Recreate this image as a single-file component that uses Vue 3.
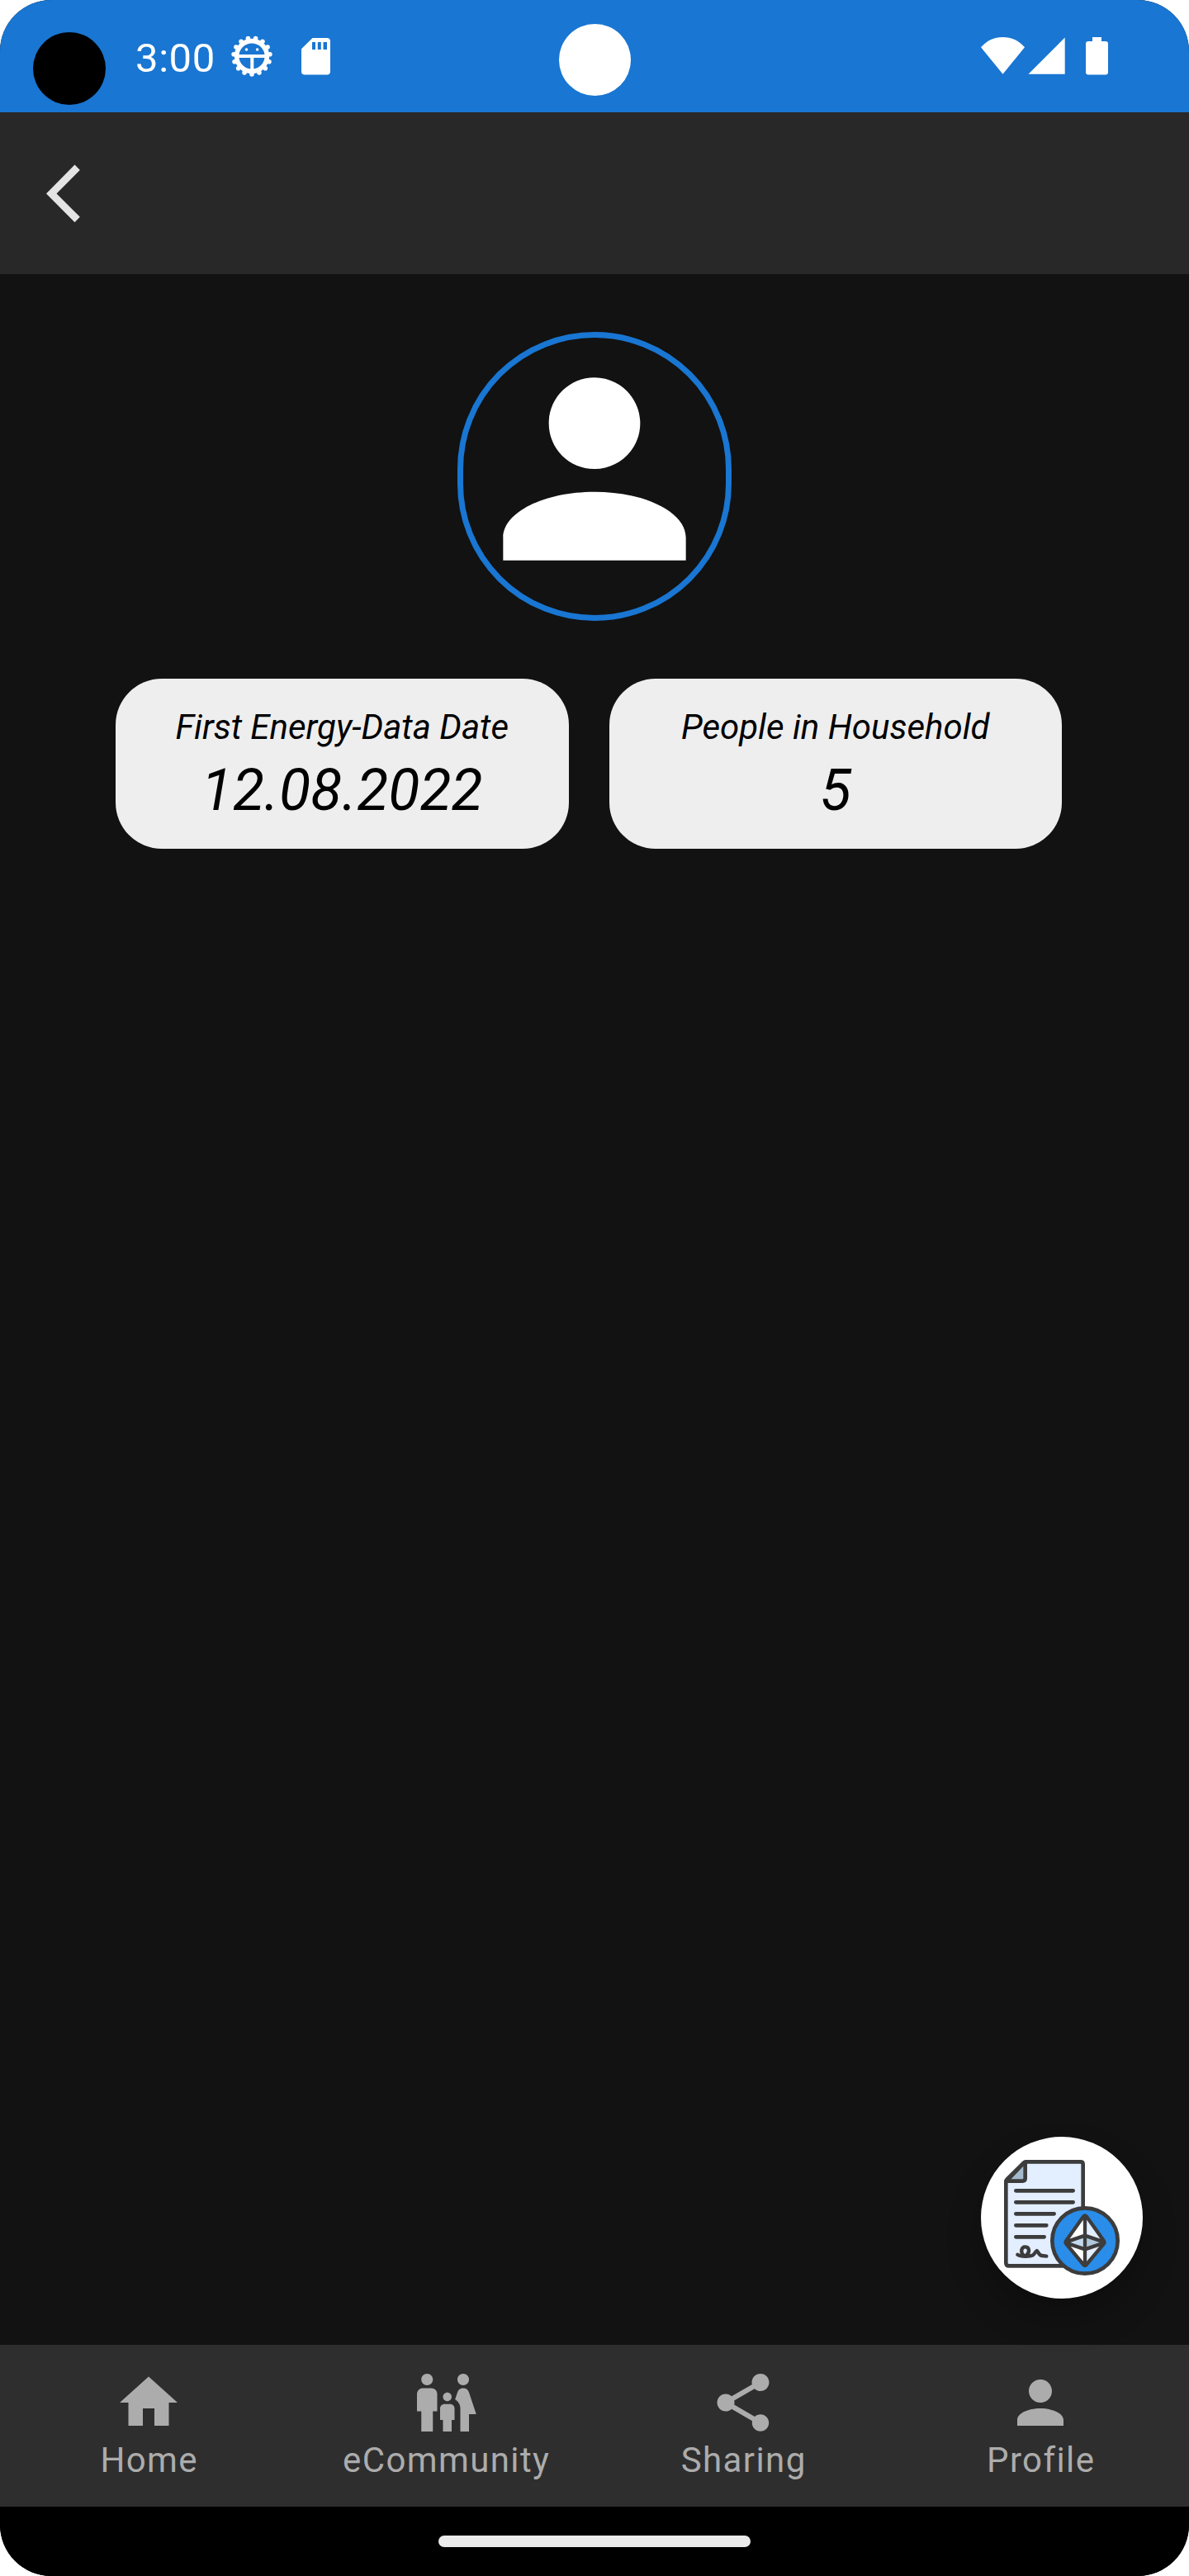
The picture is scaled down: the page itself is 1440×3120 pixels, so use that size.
<script setup>
const teeth = Array.from({ length: 15 }, (_, i) => {
  const a = ((12 + i * 24) * Math.PI) / 180
  return { x: 25 + 22 * Math.sin(a), y: 25 - 22 * Math.cos(a) }
})

const cards = [
  { label: 'First Energy-Data Date', value: '12.08.2022' },
  { label: 'People in Household', value: '5' },
]

const personPath =
  'M12 12c2.21 0 4-1.79 4-4s-1.79-4-4-4-4 1.79-4 4 1.79 4 4 4zm0 2c-4.42 0-8 1.79-8 4v2h16v-2c0-2.21-3.58-4-8-4z'

const tabs = [
  { label: 'Home', path: 'M10 20v-6h4v6h5v-8h3L12 3 2 12h3v8z' },
  {
    label: 'eCommunity',
    path: 'M16 4c0-1.11.89-2 2-2s2 .89 2 2-.89 2-2 2-2-.89-2-2zm4 18v-6h2.5l-2.54-7.63C19.68 7.55 18.92 7 18.06 7h-.12c-.86 0-1.63.55-1.9 1.37l-.86 2.58c1.08.6 1.82 1.73 1.82 3.05v8h3zm-7.5-10.5c.83 0 1.5-.67 1.5-1.5s-.67-1.5-1.5-1.5S11 9.17 11 10s.67 1.5 1.5 1.5zM5.5 6c1.11 0 2-.89 2-2s-.89-2-2-2-2 .89-2 2 .89 2 2 2zm2 16v-7H9V9c0-1.1-.9-2-2-2H4c-1.1 0-2 .9-2 2v6h1.5v7h4zm6.5 0v-4h1v-4c0-.82-.68-1.5-1.5-1.5h-2c-.82 0-1.5.68-1.5 1.5v4h1v4h3z',
  },
  {
    label: 'Sharing',
    path: 'M18 16.08c-.76 0-1.44.3-1.96.77L8.91 12.7c.05-.23.09-.46.09-.7s-.04-.47-.09-.7l7.05-4.11c.54.5 1.25.81 2.04.81 1.66 0 3-1.34 3-3s-1.34-3-3-3-3 1.34-3 3c0 .24.04.47.09.7L8.04 9.81C7.5 9.31 6.79 9 6 9c-1.66 0-3 1.34-3 3s1.34 3 3 3c.79 0 1.5-.31 2.04-.81l7.12 4.16c-.05.21-.08.43-.08.65 0 1.61 1.31 2.92 2.92 2.92 1.61 0 2.92-1.31 2.92-2.92s-1.31-2.92-2.92-2.92z',
  },
  { label: 'Profile', path: personPath },
]
</script>

<template>
  <div class="phone">
    <div class="status">
      <span class="lens"></span>
      <span class="camera"></span>
      <span class="clock">3:00</span>
      <svg class="gear" width="50" height="50" viewBox="0 0 50 50">
        <circle v-for="(t, i) in teeth" :key="i" :cx="t.x" :cy="t.y" r="2.8" fill="#fff" />
        <circle cx="25" cy="25" r="18.4" fill="none" stroke="#fff" stroke-width="5.6" />
        <path d="M9 25H41M25.3 25V41" stroke="#fff" stroke-width="4" />
        <circle cx="18.5" cy="17" r="1.8" fill="#fff" />
        <circle cx="31.6" cy="17" r="1.8" fill="#fff" />
      </svg>
      <svg class="sd" width="35" height="45" viewBox="0 0 35 45">
        <path fill="#fff" fill-rule="evenodd" d="M13.5 0H31q4 0 4 4V40.500q0 4-4 4H4q-4 0-4-4V13.300ZM13 5v9h4V5ZM19.800 5v9h4V5ZM26.500 5v9h4.500V5Z" />
      </svg>
      <span class="grow"></span>
      <svg class="wifi" width="53" height="45" viewBox="0 0 53 45">
        <path fill="#fff" d="M0 12.300C7 4 16 0 26.500 0S46 4 53 12.300L26.500 44.700Z" />
      </svg>
      <svg class="signal" width="45" height="45" viewBox="0 0 45 45">
        <path fill="#fff" d="M44.700 .5V44.700H.5Z" />
      </svg>
      <svg class="battery" width="27" height="46" viewBox="0 0 27 46">
        <path fill="#fff" d="M8 0H19V5H24q3 0 3 3V42.600q0 3-3 3H3q-3 0-3-3V8q0-3 3-3H8Z" />
      </svg>
    </div>

    <header class="appbar">
      <svg width="42" height="71" viewBox="0 0 42 71">
        <path fill="#e4e4e4" d="M34.500 .5 40.800 7 12.500 35.500 40.800 63.800 34.500 70.300 0 35.500Z" />
      </svg>
    </header>

    <main class="content">
      <div class="avatar">
        <svg width="332" height="332" viewBox="0 0 24 24"><path fill="#fff" :d="personPath" /></svg>
      </div>
      <div class="cards">
        <section v-for="c in cards" :key="c.label" class="card">
          <span class="label">{{ c.label }}</span>
          <span class="value">{{ c.value }}</span>
        </section>
      </div>
      <button class="fab" aria-label="Contract">
        <svg width="196" height="196" viewBox="84 84 588 588" fill="none" stroke="#3c3c3c" stroke-width="14" stroke-linecap="round" stroke-linejoin="round">
          <path fill="#e3eeff" d="M247 175H446q9 0 9 9V544q0 9-9 9H186q-11 0-11-11V246q0-4 4-8L240 178q3-3 7-3Z" />
          <path fill="#a4b9cb" d="M245 177V235q0 10-10 10H177L240 179Z" />
          <path d="M211 280H419M211 322H419M211 364H350M211 406H322M211 448H314" />
          <path stroke-width="13" d="M217 512C228 520 262 520 273 514 280 509 283 499 287 498 292 500 294 516 306 516L322 518M239 515C227 504 230 484 245 484 261 484 263 506 247 516" />
          <circle cx="462" cy="462" r="119" fill="#298de9" />
          <g stroke="none">
            <path fill="#fff" d="M462 370V554L391 468Z" />
            <path fill="#e3eeff" d="M462 370V554L533 468Z" />
            <path fill="#c3d9ee" d="M391 468 462 443V493Z" />
            <path fill="#b0c9da" d="M533 468 462 443V493Z" />
          </g>
          <path stroke-width="13" d="M457 373q5-6 10 0L531 463q3 5 0 9L467 549q-5 6-10 0L393 472q-3-4 0-9ZM462 370V552M394 466 462 443 530 466M394 470 462 493 530 470" />
        </svg>
      </button>
    </main>

    <nav class="tabs">
      <a v-for="t in tabs" :key="t.label" class="tab">
        <svg width="84" height="84" viewBox="0 0 24 24"><path fill="#acacac" :d="t.path" /></svg>
        <span>{{ t.label }}</span>
      </a>
    </nav>
    <div class="system"><span class="pill"></span></div>
  </div>
</template>

<style>
body {
  margin: 0;
  background: #fff;
}
</style>

<style scoped>
.phone {
  width: 1440px;
  height: 3120px;
  display: flex;
  flex-direction: column;
  overflow: hidden;
  border-radius: 62px;
  background: #121212;
  font-family: Roboto, "Liberation Sans", sans-serif;
}
.status {
  position: relative;
  display: flex;
  align-items: flex-start;
  box-sizing: border-box;
  height: 136px;
  padding: 0 98px 0 164px;
  background: #1976d2;
}
.lens,
.camera {
  position: absolute;
  border-radius: 50%;
}
.lens {
  left: 40px;
  top: 39px;
  width: 88px;
  height: 88px;
  background: #000;
}
.camera {
  left: 677px;
  top: 29px;
  width: 87px;
  height: 87px;
  background: #fff;
}
.clock {
  width: 116px;
  margin-top: 42px;
  font-size: 49px;
  line-height: 58px;
  letter-spacing: 0.6px;
  color: #fff;
}
.gear {
  margin-top: 43px;
}
.sd {
  margin: 46px 0 0 35px;
}
.grow {
  flex: 1;
}
.wifi {
  margin-top: 45px;
}
.signal {
  margin: 45px 0 0 4px;
}
.battery {
  margin: 45px 0 0 25px;
}
.appbar {
  display: flex;
  align-items: center;
  box-sizing: border-box;
  height: 196px;
  padding-left: 56px;
  background: #282828;
}
.content {
  position: relative;
  flex: 1;
  display: flex;
  flex-direction: column;
  align-items: center;
  padding-top: 70px;
}
.avatar {
  box-sizing: border-box;
  width: 332px;
  height: 350px;
  border: 7px solid #1976d2;
  border-radius: 175px;
}
.avatar svg {
  display: block;
  margin: -7px;
}
.cards {
  display: flex;
  gap: 49px;
  align-self: stretch;
  margin: 70px 154px 0 140px;
}
.card {
  flex: 1;
  display: flex;
  flex-direction: column;
  align-items: center;
  box-sizing: border-box;
  height: 206px;
  padding-top: 35px;
  border-radius: 56px;
  background: #eee;
  color: #000;
  font-style: italic;
}
.label {
  font-size: 42px;
  line-height: 48px;
}
.value {
  font-size: 70px;
  line-height: 82px;
  margin-top: 11px;
}
.fab {
  position: absolute;
  right: 56px;
  bottom: 56px;
  width: 196px;
  height: 196px;
  padding: 0;
  border: 0;
  border-radius: 50%;
  background: #fff;
  box-shadow: 0 24px 44px rgba(0, 0, 0, 0.24);
}
.fab svg {
  display: block;
}
.tabs {
  display: flex;
  height: 196px;
  background: #2e2e2e;
}
.tab {
  flex: 1;
  display: flex;
  flex-direction: column;
  align-items: center;
  padding-top: 28px;
  color: #acacac;
  font-size: 42px;
  line-height: 50px;
  letter-spacing: 1.4px;
}
.tab span {
  margin-top: 3px;
  padding-left: 1.4px;
}
.system {
  height: 84px;
  display: flex;
  align-items: center;
  justify-content: center;
  background: #000;
}
.pill {
  width: 378px;
  height: 14px;
  border-radius: 7px;
  background: #ebebeb;
}
</style>
